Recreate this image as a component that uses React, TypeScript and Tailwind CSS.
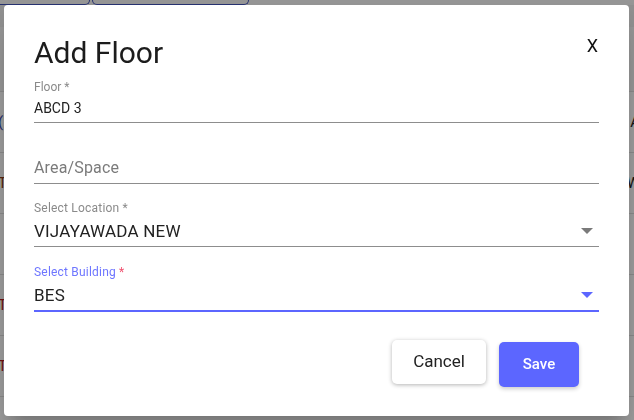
import * as React from "react";

const rows = [
  { left: "(", leftColor: "text-[#3949ab]", right: "A" },
  { left: "T", leftColor: "text-[#8d3b14]", right: "W" },
  { left: "", leftColor: "", right: "" },
  { left: "T", leftColor: "text-[#b71c1c]", right: "" },
  { left: "T", leftColor: "text-[#b71c1c]", right: "" },
];

function Caret({ active }: { active?: boolean }) {
  return (
    <svg width="12" height="6" viewBox="0 0 12 6" className="mt-[9px]">
      <path d="M0 0h12L6 6z" fill={active ? "#5c66ff" : "#7a7a7a"} />
    </svg>
  );
}

function BackgroundPage() {
  return (
    <div className="min-h-[420px] bg-white font-['Roboto',sans-serif]">
      <div className="flex h-[5px] bg-[#f2f2f2]">
        <div className="ml-[-4px] w-[94px] rounded-b-[6px] border-b border-r border-[#3f51b5]" />
        <div className="ml-[2px] w-[157px] rounded-b-[6px] border-b border-x border-[#3f51b5]" />
      </div>
      <div className="h-[22px] bg-[#e9e9e9]" />
      <div className="h-[65px] border-b border-[#e0e0e0] bg-[#f4f4f4]" />
      {rows.map((r, i) => (
        <div
          key={i}
          className="flex h-[61px] items-center justify-between border-b border-[#e0e0e0] text-[15px]"
        >
          <span className={`ml-[-2px] ${r.leftColor}`}>{r.left}</span>
          <span className="mr-[-6px] text-[#222]">{r.right}</span>
        </div>
      ))}
    </div>
  );
}

export default function App() {
  return (
    <div className="relative h-[420px] w-[634px] overflow-hidden">
      <BackgroundPage />
      <div className="fixed inset-0 bg-black/[0.38]" />
      <div className="fixed left-[4px] top-[5px] flex h-[411px] w-[625px] flex-col rounded-[4px] bg-white px-[30px] pt-[28px] font-['Roboto',sans-serif] shadow-[0_11px_15px_-7px_rgba(0,0,0,0.2),0_24px_38px_3px_rgba(0,0,0,0.14)]">
        <div className="flex items-start justify-between">
          <h2 className="pt-[2px] text-[30px] leading-[36px] font-normal text-[#1c1c1c]">Add Floor</h2>
          <button className="mt-[3px] mr-[1px] text-[18px] leading-[20px] text-[#111]">X</button>
        </div>

        {/* Floor */}
        <div className="mt-[9px]">
          <div className="text-[12px] leading-[14px] text-[#8a8a8a]">Floor *</div>
          <div className="mt-[4px] h-[25px] border-b border-[#8d8d8d] text-[14px] leading-[20px] text-[#222]">
            ABCD 3
          </div>
        </div>

        {/* Area */}
        <div className="mt-[15px]">
          <div className="h-[14px]" />
          <div className="mt-[4px] h-[28px] border-b border-[#8d8d8d] text-[16px] leading-[24px] tracking-[0.15px] text-[#7b7b7b]">
            Area/Space
          </div>
        </div>

        {/* Location */}
        <div className="mt-[17px]">
          <div className="text-[12px] leading-[14px] tracking-[0.2px] text-[#8a8a8a]">Select Location *</div>
          <div className="mt-[4px] flex h-[28px] items-start justify-between border-b border-[#8d8d8d] pr-[6px]">
            <span className="text-[17px] leading-[24px] tracking-[0.2px] text-[#222]">VIJAYAWADA NEW</span>
            <Caret />
          </div>
        </div>

        {/* Building */}
        <div className="mt-[18px]">
          <div className="text-[12px] leading-[14px] tracking-[0.2px] text-[#6e76ff]">
            Select Building <span className="text-[#f0506e]">*</span>
          </div>
          <div className="mt-[4px] flex h-[29px] items-start justify-between border-b-2 border-[#5c66ff] pr-[6px]">
            <span className="text-[17px] leading-[24px] tracking-[0.2px] text-[#222]">BES</span>
            <Caret active />
          </div>
        </div>

        <div className="mt-[28px] mr-[20px] flex items-start justify-end gap-[13px]">
          <button className="h-[44px] w-[94px] rounded-[5px] bg-white text-[17px] text-[#222] shadow-[0_1px_4px_rgba(0,0,0,0.3)]">
            Cancel
          </button>
          <button className="mt-[2px] h-[45px] w-[80px] rounded-[5px] bg-[#5c66ff] text-[15px] font-medium text-white shadow-[0_2px_4px_rgba(0,0,0,0.2)]">
            Save
          </button>
        </div>
      </div>
    </div>
  );
}
